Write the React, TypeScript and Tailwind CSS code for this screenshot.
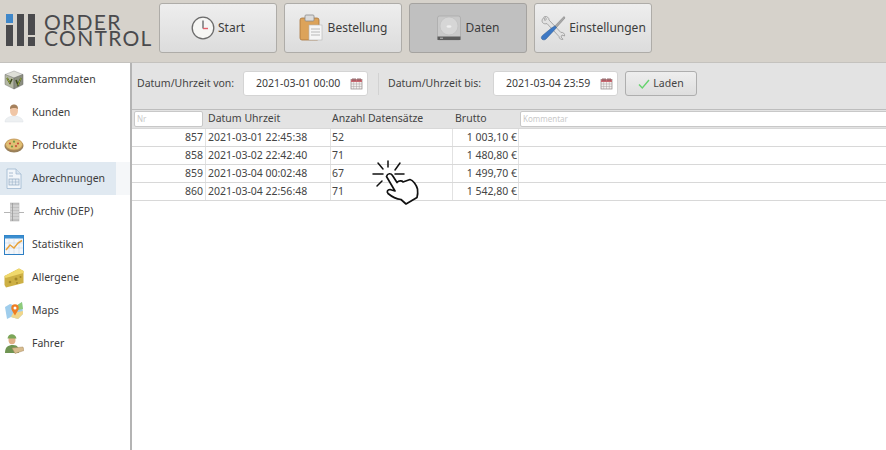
import React from "react";

const font = { fontFamily: '"Noto Sans", "Open Sans", sans-serif' };

function Clock() {
  return (
    <svg width="24" height="24" viewBox="0 0 24 24">
      <circle cx="12" cy="12" r="10.8" fill="#f6f6f4" stroke="#6b6b6b" strokeWidth="1.3" />
      <path d="M12 4.5V12.5" stroke="#555" strokeWidth="1.2" fill="none" />
      <path d="M12 12.5H17" stroke="#e4606a" strokeWidth="1.4" fill="none" />
    </svg>
  );
}
function Clipboard() {
  return (
    <svg width="26" height="28" viewBox="0 0 26 28">
      <rect x="1" y="4" width="19" height="22" rx="2" fill="#dca35a" stroke="#a8743a" strokeWidth="0.8" />
      <rect x="6" y="1" width="9" height="6" rx="1" fill="#dcdcdc" stroke="#8a8a8a" strokeWidth="0.8" />
      <rect x="10" y="11" width="13" height="15" fill="#f6f6f6" stroke="#b5b5b5" strokeWidth="0.6" />
      <path d="M12 15H21M12 18H21M12 21H21" stroke="#a9a9a9" strokeWidth="0.8" />
    </svg>
  );
}
function Disk() {
  return (
    <svg width="26" height="26" viewBox="0 0 26 26">
      <rect x="1.5" y="1" width="23" height="24" rx="2" fill="#c9c9c9" stroke="#a6a6a6" strokeWidth="0.7" />
      <circle cx="13" cy="11" r="9" fill="#d6d6d6" stroke="#bdbdbd" strokeWidth="0.6" />
      <ellipse cx="13" cy="11.5" rx="2.5" ry="1.2" fill="#efefef" />
      <rect x="1.5" y="21.5" width="23" height="3.5" fill="#5c5c5c" />
      <rect x="4" y="22.7" width="3" height="1" fill="#bbb" />
    </svg>
  );
}
function Tools() {
  return (
    <svg width="26" height="26" viewBox="0 0 26 26">
      <path d="M4 2.5C2 3.5 1.5 6 2.5 7.5 3.7 9 5.6 9 7 8.6L19 21.5C19 23.6 21 25 23 24.3L21 22 22 20 24.6 21C25 18.5 23 17 20.8 17.4L9 5C9.3 3 7 .8 4.4 1.6L6.5 4 5 5.6Z" fill="#e2e2e2" stroke="#8c8c8c" strokeWidth="0.7" />
      <path d="M24 1.5 25 3 16.5 12.5 14.8 11Z" fill="#a8a8a8" stroke="#777" strokeWidth="0.5" />
      <path d="M14.8 11 16.5 12.5 14 15.5 6 24C4.5 25.4 2 25 1.5 23.5 1 22.5 1.6 21.2 2.5 20.4L11.5 13Z" fill="#3d78c4" stroke="#28568f" strokeWidth="0.5" />
    </svg>
  );
}
function Calendar() {
  return (
    <svg width="13" height="13" viewBox="0 0 13 13" className="shrink-0">
      <rect x="1" y="2.5" width="11" height="9.5" fill="#f3f0ee" stroke="#8c8484" strokeWidth="0.7" />
      <rect x="1" y="2.5" width="11" height="2.5" fill="#c96a72" />
      <path d="M3 1V4M5 1V4M8 1V4M10 1V4" stroke="#7a4a4e" strokeWidth="0.8" />
      <path d="M1 7H12M1 9.5H12M3.7 5V12M6.5 5V12M9.3 5V12" stroke="#a9a3a3" strokeWidth="0.5" />
    </svg>
  );
}
function Cube() {
  return (
    <svg width="20" height="20" viewBox="0 0 20 20">
      <path d="M10 1 19 4.5 10 8 1 4.5Z" fill="#dedfd8" stroke="#9a9a9a" strokeWidth="0.5" />
      <path d="M1 4.5 10 8V19L1 14.5Z" fill="#b4b8a2" stroke="#777" strokeWidth="0.5" />
      <path d="M19 4.5 10 8V19L19 14.5Z" fill="#8c8f80" stroke="#666" strokeWidth="0.5" />
      <path d="M3 8 6 13 8 9M12 10 14 15 17 8" stroke="#3c4a1c" strokeWidth="1.6" fill="none" />
      <path d="M3 8 6 13M14 15 17 8" stroke="#c6d84a" strokeWidth="0.7" fill="none" />
    </svg>
  );
}
function Person() {
  return (
    <svg width="20" height="20" viewBox="0 0 20 20">
      <path d="M1 19C1 15 5 14 8 13H12C15 14 19 15 19 19Z" fill="#edf0f2" stroke="#dde0e4" strokeWidth="0.5" />
      <ellipse cx="10" cy="7.5" rx="4" ry="5.5" fill="#f0c6a6" />
      <path d="M6 6C6 2.5 8 1.5 10 1.5S14 2.5 14 6C12.5 4.5 8 4.5 6 6Z" fill="#a5805c" />
    </svg>
  );
}
function Pizza() {
  return (
    <svg width="21" height="17" viewBox="0 0 20 16">
      <ellipse cx="10" cy="8.5" rx="9.5" ry="6.5" fill="#99805a" />
      <ellipse cx="10" cy="7" rx="8.5" ry="5.5" fill="#e0bf74" stroke="#bf8f4e" strokeWidth="0.8" />
      <circle cx="6" cy="6" r="1.1" fill="#c9503c" />
      <circle cx="10" cy="4.2" r="1.1" fill="#6f9a42" />
      <circle cx="14" cy="6" r="1.1" fill="#c9503c" />
      <circle cx="8" cy="9" r="1.1" fill="#6f9a42" />
      <circle cx="12" cy="8.6" r="1.1" fill="#c9503c" />
    </svg>
  );
}
function Doc() {
  return (
    <svg width="18" height="22" viewBox="0 0 18 22">
      <path d="M2 1H11L16 6V20.5H2Z" fill="#f2f6fa" stroke="#9db6cf" strokeWidth="0.8" />
      <path d="M11 1V6H16" fill="#d8e3ee" stroke="#9db6cf" strokeWidth="0.7" />
      <path d="M4 5H8M4 8H8" stroke="#9ab0c6" strokeWidth="0.8" />
      <rect x="4" y="11" width="10" height="6" fill="#e6edf4" stroke="#90a8c1" strokeWidth="0.7" />
      <path d="M7.3 11V17M10.6 11V17M4 14H14" stroke="#90a8c1" strokeWidth="0.5" />
    </svg>
  );
}
function Server() {
  return (
    <svg width="20" height="20" viewBox="0 0 20 20">
      <path d="M0 10.5H20" stroke="#b5b5b5" strokeWidth="1" />
      <rect x="6.5" y="1" width="8.5" height="18" fill="#c2c2c2" stroke="#acacac" strokeWidth="0.5" />
      <path d="M6.5 4H15M6.5 7H15M6.5 10H15M6.5 13H15M6.5 16H15" stroke="#ececec" strokeWidth="0.8" />
      <path d="M8.5 1V19" stroke="#999" strokeWidth="0.8" />
    </svg>
  );
}
function ChartIcon() {
  return (
    <svg width="20" height="20" viewBox="0 0 20 20">
      <rect x="0.5" y="0.5" width="19" height="19" fill="#f3f6fa" stroke="#2d7fc4" strokeWidth="1" />
      <rect x="0.5" y="0.5" width="19" height="3" fill="#3b8ed0" />
      <path d="M5 3.5V19M10 3.5V19M15 3.5V19M1 8H19M1 13H19" stroke="#c5d2de" strokeWidth="0.5" />
      <path d="M2 15 6 10 10 13 14 8 18 5.5" stroke="#e8a23a" strokeWidth="1.5" fill="none" />
    </svg>
  );
}
function Cheese() {
  return (
    <svg width="20" height="20" viewBox="0 0 20 20">
      <path d="M0.5 8 15 0.5 19.5 3V15L2 19.5 0.5 17Z" fill="#cdb044" />
      <path d="M0.5 8 15 0.5 19.5 3 19.5 5 1.5 10Z" fill="#f0d96c" />
      <circle cx="6" cy="14" r="1.3" fill="#a38729" />
      <circle cx="12" cy="11" r="1.5" fill="#a38729" />
      <circle cx="16.5" cy="9" r="1" fill="#a38729" />
      <circle cx="13" cy="15" r="0.9" fill="#a38729" />
    </svg>
  );
}
function MapIcon() {
  return (
    <svg width="20" height="20" viewBox="0 0 20 20">
      <path d="M1 6 6 3 12 5 18 1 19 13 14 18 7 16 3 18Z" fill="#9fcdec" />
      <path d="M12 5 18 1 19 8 14 9Z" fill="#8ecb7a" />
      <path d="M7 16 14 18 19 13 19 10 9 12Z" fill="#f1d68a" />
      <path d="M11 14.5C8.5 10 7.3 9 7.3 7A3.7 3.7 0 0 1 14.7 7C14.7 9 13.5 10 11 14.5Z" fill="#ef7d22" />
      <circle cx="11" cy="7" r="1.5" fill="#fff" />
    </svg>
  );
}
function Driver() {
  return (
    <svg width="20" height="21" viewBox="0 0 20 21">
      <path d="M1 20C1 14 4 12 9 12S15 15 15 20Z" fill="#6f9452" />
      <ellipse cx="8" cy="7" rx="3.5" ry="4.2" fill="#e2b088" />
      <path d="M3.5 5.5C4 .5 11 -.5 12.5 5.5Z" fill="#7ba658" />
      <path d="M8 15 19 14 20 17.5 11 20.5Z" fill="#d8bc8e" stroke="#a78b61" strokeWidth="0.5" />
    </svg>
  );
}
function Check() {
  return (
    <svg width="12" height="12" viewBox="0 0 12 12">
      <path d="M1 6.5 4.3 10 11 2" stroke="#66d36e" strokeWidth="1.4" fill="none" />
    </svg>
  );
}
function Hand() {
  return (
    <svg width="50" height="48" viewBox="0 0 50 48" fill="none" stroke="#111" strokeLinecap="round" strokeLinejoin="round">
      <path d="M16 1V7M6 3 11 9M28 3 23 10M1 14H11M23 14H32M5 26 10 21" strokeWidth="1.5" />
      <path d="M14.5 16.5C15.5 13 19 13 20.5 15.5L25 22.5C27 20.5 30 20.5 31 22L38 19.5C41 20 44.5 25 45.5 29 46 33 45.5 36 45 37.5L34 44 29 39.5C25 39 19 36 16 33.5 14.5 32 15.5 29.5 18 29.5L23 31Z" strokeWidth="1.7" fill="#fff" />
    </svg>
  );
}

const navItems: { label: string; icon: React.ReactNode; active?: boolean; archive?: boolean }[] = [
  { label: "Stammdaten", icon: <Cube /> },
  { label: "Kunden", icon: <Person /> },
  { label: "Produkte", icon: <Pizza /> },
  { label: "Abrechnungen", icon: <Doc />, active: true },
  { label: "Archiv (DEP)", icon: <Server />, archive: true },
  { label: "Statistiken", icon: <ChartIcon /> },
  { label: "Allergene", icon: <Cheese /> },
  { label: "Maps", icon: <MapIcon /> },
  { label: "Fahrer", icon: <Driver /> },
];

const rows = [
  ["857", "2021-03-01 22:45:38", "52", "1 003,10 €"],
  ["858", "2021-03-02 22:42:40", "71", "1 480,80 €"],
  ["859", "2021-03-04 00:02:48", "67", "1 499,70 €"],
  ["860", "2021-03-04 22:56:48", "71", "1 542,80 €"],
];

function TopButton({ label, icon, active }: { label: string; icon: React.ReactNode; active?: boolean }) {
  return (
    <div
      className={
        active
          ? "w-[118px] h-[50px] flex items-center justify-center gap-[3px] rounded-[3px] border border-[#a5a3a0] bg-[#c0c0c0] text-[12px] text-[#3c3c3c]"
          : "w-[118px] h-[50px] flex items-center justify-center gap-[3px] rounded-[3px] border border-[#aeaca8] bg-gradient-to-b from-[#eeeeee] to-[#dcdcdc] text-[12px] text-[#3c3c3c]"
      }
    >
      {icon}
      <span>{label}</span>
    </div>
  );
}

function DateField({ value }: { value: string }) {
  return (
    <div className="w-[125px] h-[25px] flex items-center justify-between pl-[12px] pr-[4px] bg-white rounded-[3px] border border-[#d4d4d4] text-[10.5px] text-[#3c3c3c]">
      <span className="whitespace-nowrap">{value}</span>
      <Calendar />
    </div>
  );
}

const colClasses = ["w-[74px] shrink-0", "w-[125px] shrink-0", "w-[122px] shrink-0", "w-[66px] shrink-0"];

export default function App() {
  return (
    <div className="relative w-[886px] h-[450px] overflow-hidden bg-white flex flex-col" style={font}>
      <header className="h-[63px] shrink-0 bg-[#d6d2cb] flex items-start border-b border-[#c4c2be]">
        <div className="w-[159px] shrink-0 pl-[6px] pt-[14px] flex items-center gap-[8px]">
          <svg width="30" height="32" viewBox="0 0 30 32" className="shrink-0">
            <rect x="0" y="0" width="7" height="9" fill="#3f87c9" />
            <rect x="0" y="11" width="7" height="21" fill="#4a4a4d" />
            <rect x="11" y="0" width="7" height="32" fill="#4a4a4d" />
            <rect x="22" y="0" width="7" height="21" fill="#4a4a4d" />
            <rect x="22" y="23" width="7" height="9" fill="#4a4a4d" />
          </svg>
          <div className="font-['Lato'] text-[21px] leading-[16px] tracking-[1.3px] text-[#4a4a4d]">
            <div className="h-[16px]">ORDER</div>
            <div className="h-[16px]">CONTROL</div>
          </div>
        </div>
        <div className="flex gap-[7px] pt-[3px]">
          <TopButton label="Start" icon={<Clock />} />
          <TopButton label="Bestellung" icon={<Clipboard />} />
          <TopButton label="Daten" icon={<Disk />} active />
          <TopButton label="Einstellungen" icon={<Tools />} />
        </div>
      </header>
      <div className="flex-1 flex min-h-0">
        <nav className="w-[130px] shrink-0 bg-white">
          {navItems.map((n) => (
            <div key={n.label} className={n.active ? "h-[33px] flex bg-[#f5f7f9]" : "h-[33px] flex"}>
              <div
                className={
                  (n.active ? "bg-[#e0e9f1] " : "") +
                  "w-[116px] flex items-center text-[10.5px] text-[#3c3c3c] pl-[4px]"
                }
              >
                <span className="w-[20px] h-[22px] flex items-center justify-center shrink-0">{n.icon}</span>
                <span className={n.archive ? "ml-[10px] whitespace-nowrap" : "ml-[8px] whitespace-nowrap"}>{n.label}</span>
              </div>
            </div>
          ))}
        </nav>
        <main className="flex-1 flex flex-col border-l-2 border-[#b4b4b4] min-w-0 overflow-hidden">
          <div className="h-[47px] shrink-0 bg-[#e3e3e3] flex items-center pl-[5px] pb-[5px] text-[10.5px] text-[#444] border-b border-[#bdbdbd]">
            <span className="whitespace-nowrap w-[106px]">Datum/Uhrzeit von:</span>
            <DateField value="2021-03-01 00:00" />
            <span className="w-px h-[22px] bg-[#d2d2d2] ml-[10px] mr-[9px]" />
            <span className="whitespace-nowrap w-[105px]">Datum/Uhrzeit bis:</span>
            <DateField value="2021-03-04 23:59" />
            <div className="ml-[7px] w-[72px] h-[25px] flex items-center justify-center gap-[3px] rounded-[3px] border border-[#aeaeae] bg-gradient-to-b from-[#eeeeee] to-[#dedede]">
              <Check />
              <span>Laden</span>
            </div>
          </div>
          <div className="h-[19px] shrink-0 bg-[#e3e3e3] flex items-center text-[10.5px] text-[#444] border-b border-[#d8d8d8]">
            <div className={colClasses[0] + " h-full flex items-center pl-[2px]"}>
              <div className="w-[69px] h-[16px] bg-white rounded-[2px] border border-[#c8c8c8] text-[8px] text-[#c9c9c9] flex items-center pl-[2px]">Nr</div>
            </div>
            <div className={colClasses[1] + " pl-[2px]"}>Datum Uhrzeit</div>
            <div className={colClasses[2] + " pl-[1px]"}>Anzahl Datensätze</div>
            <div className={colClasses[3] + " pl-[2px]"}>Brutto</div>
            <div className="flex-1 min-w-0 h-full flex items-center pl-[1px]">
              <div className="w-[380px] h-[16px] shrink-0 bg-white rounded-[2px] border border-[#c8c8c8] text-[8px] text-[#c9c9c9] flex items-center pl-[2px]">Kommentar</div>
            </div>
          </div>
          {rows.map((r) => (
            <div key={r[0]} className="h-[18px] shrink-0 flex items-center text-[10.5px] text-[#444] border-b border-[#d8d8d8]">
              <div className={colClasses[0] + " h-full flex items-center justify-end pr-[2px] border-r border-[#e2e2e2]"}>{r[0]}</div>
              <div className={colClasses[1] + " h-full flex items-center pl-[2px] border-r border-[#e2e2e2] whitespace-nowrap"}>{r[1]}</div>
              <div className={colClasses[2] + " h-full flex items-center pl-[1px] border-r border-[#e2e2e2]"}>{r[2]}</div>
              <div className={colClasses[3] + " h-full flex items-center justify-end pr-[1px] border-r border-[#e2e2e2] whitespace-nowrap"}>{r[3]}</div>
              <div className="flex-1" />
            </div>
          ))}
        </main>
      </div>
      <div className="absolute left-[372px] top-[160px]">
        <Hand />
      </div>
    </div>
  );
}
